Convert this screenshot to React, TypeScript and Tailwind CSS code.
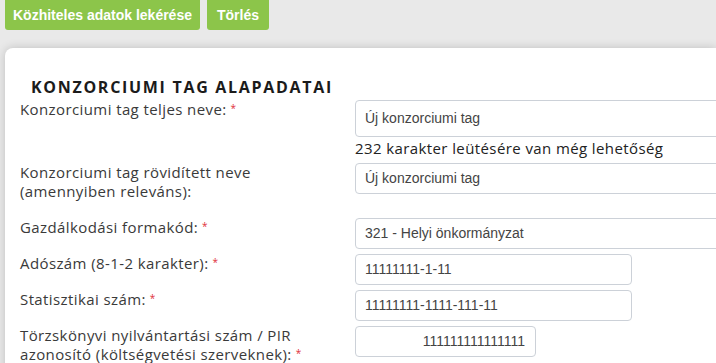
import React from "react";

const labelFont = { fontFamily: '"Open Sans", "Noto Sans", sans-serif' };

function Star() {
  return <span className="text-[#e0303a] text-[10px] align-top relative top-[-1px] ml-[4px]">*</span>;
}

function Input({ value, w, h = "h-[31px]", right = false }: { value: string; w: string; h?: string; right?: boolean }) {
  return (
    <div
      className={`${w} ${h} shrink-0 border border-[#ccd1d8] rounded-[4px] bg-white flex items-center text-[14px] tracking-normal text-[#444] ${right ? "justify-end pr-[10px]" : "pl-[9px]"}`}
      style={{ fontFamily: '"Liberation Sans", Arial, sans-serif' }}
    >
      {value}
    </div>
  );
}

export default function App() {
  return (
    <div className="w-[716px] h-[363px] overflow-hidden bg-[#e9e9e9]">
      <div className="flex gap-[7px] pl-[5px] -mt-[3px]" style={{ fontFamily: '"Liberation Sans", Arial, sans-serif' }}>
        <div className="h-[33px] pt-[3px] px-[8px] bg-[#8cc54a] rounded-[3px] text-white font-bold text-[14px] flex items-center">
          Közhiteles adatok lekérése
        </div>
        <div className="h-[33px] pt-[3px] px-[10px] bg-[#8cc54a] rounded-[3px] text-white font-bold text-[14px] flex items-center">
          Törlés
        </div>
      </div>
      <div
        className="mt-[18px] ml-[5px] bg-white rounded-tl-[8px] shadow-[0_0_10px_rgba(0,0,0,0.18)] h-[400px] pt-[29px] pl-[15px]"
        style={labelFont}
      >
        <div className="pl-[11px] text-[16px] leading-[20px] font-bold tracking-[1.7px] text-[#1b1b1b] h-[23px]">
          KONZORCIUMI TAG ALAPADATAI
        </div>
        <div className="text-[15px] leading-[19px] tracking-[0.4px] text-[#3a3a3a]">
          <div className="flex">
            <div className="w-[335px] shrink-0">
              Konzorciumi tag teljes neve:<Star />
            </div>
            <div className="shrink-0">
              <Input value="Új konzorciumi tag" w="w-[400px]" h="h-[37px]" />
              <div className="h-[26px] pt-[2px] text-[#222]">232 karakter leütésére van még lehetőség</div>
            </div>
          </div>
          <div className="flex mb-[17px]">
            <div className="w-[335px] shrink-0">
              Konzorciumi tag rövidített neve
              <br />
              (amennyiben releváns):
            </div>
            <Input value="Új konzorciumi tag" w="w-[400px]" />
          </div>
          <div className="flex mb-[5px]">
            <div className="w-[335px] shrink-0">
              Gazdálkodási formakód:<Star />
            </div>
            <Input value="321 - Helyi önkormányzat" w="w-[400px]" />
          </div>
          <div className="flex mb-[5px]">
            <div className="w-[335px] shrink-0">
              Adószám (8-1-2 karakter):<Star />
            </div>
            <Input value="11111111-1-11" w="w-[277px]" />
          </div>
          <div className="flex mb-[5px]">
            <div className="w-[335px] shrink-0">
              Statisztikai szám:<Star />
            </div>
            <Input value="11111111-1111-111-11" w="w-[277px]" />
          </div>
          <div className="flex">
            <div className="w-[335px] shrink-0">
              Törzskönyvi nyilvántartási szám / PIR
              <br />
              azonosító (költségvetési szerveknek):<Star />
            </div>
            <Input value="111111111111111" w="w-[181px]" right />
          </div>
        </div>
      </div>
    </div>
  );
}
